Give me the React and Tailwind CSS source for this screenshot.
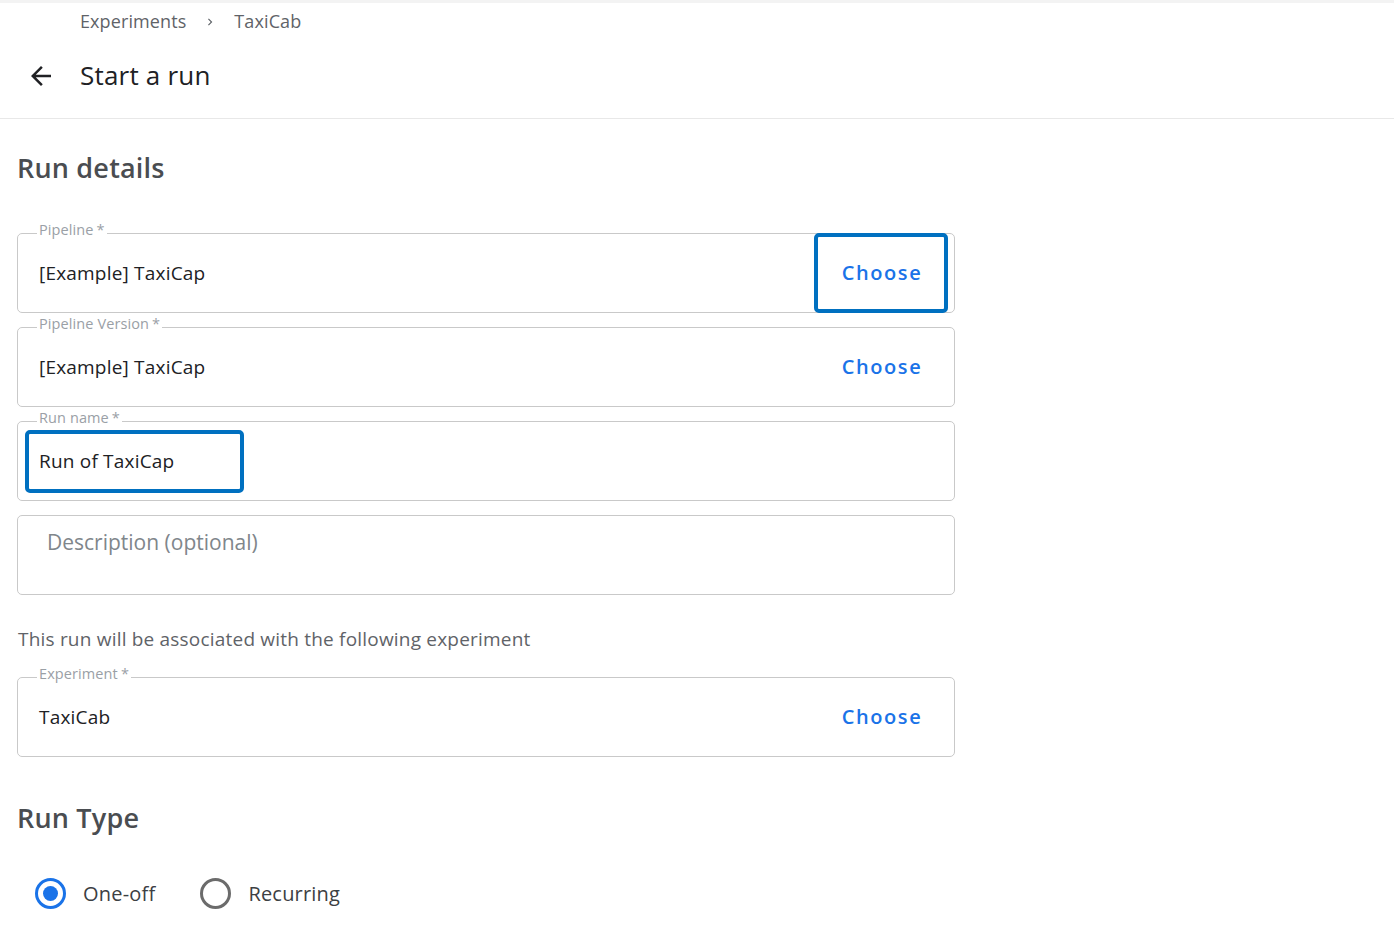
import React, { useState } from 'react';

const font = { fontFamily: '"Open Sans", Roboto, Arial, sans-serif' };

const Field = ({ label, value, choose, highlightChoose, highlightValue }) => (
  <fieldset className="border border-[#c9c9c9] rounded-[5px] px-[20px] mx-0 min-w-0">
    <legend className="-ml-[1px] px-[2px] pb-[6px] text-[14.5px] leading-[14px] text-[#9aa0a6] tracking-[0.1px]">
      {label}
      <span className="ml-[3px]">*</span>
    </legend>
    <div className="h-[78px] -mt-[9px] flex items-center justify-between">
      {highlightValue ? (
        <div className="-ml-[13px] h-[63px] w-[219px] border-[4px] border-[#0070c0] rounded-[5px] flex items-center pl-[10px] text-[19px] text-[#202124] tracking-[0.2px]">
          {value}
        </div>
      ) : (
        <span className="ml-[1px] text-[19px] text-[#202124] tracking-[0.2px]">{value}</span>
      )}
      {choose && (
        <div
          className={
            'h-[80px] w-[134px] -mr-[14px] flex items-center justify-center rounded-[5px] border-[4px] ' +
            (highlightChoose ? 'border-[#0070c0]' : 'border-transparent')
          }
        >
          <span className="ml-[2px] text-[20px] font-semibold tracking-[1.6px] text-[#1a73e8]">Choose</span>
        </div>
      )}
    </div>
  </fieldset>
);

const Radio = ({ checked, label, onClick }) => (
  <button onClick={onClick} className="flex items-center gap-[17px]">
    <span
      className={
        'w-[31px] h-[31px] rounded-full border-[3px] flex items-center justify-center ' +
        (checked ? 'border-[#1a73e8]' : 'border-[#6b6b6b]')
      }
    >
      {checked && <span className="w-[15px] h-[15px] rounded-full bg-[#1a73e8]" />}
    </span>
    <span className="text-[20px] text-[#3c4043] tracking-[0.2px]">{label}</span>
  </button>
);

export default function App() {
  const [runType, setRunType] = useState('oneoff');

  return (
    <div style={font} className="min-h-screen bg-white">
      <div className="border-t-[3px] border-[#f3f3f3] border-b border-b-[#e8e8e8] h-[119px]">
        <div className="flex items-center pl-[80px] pt-[5px] text-[18px] text-[#5f6368] tracking-[0.1px]">
          <span>Experiments</span>
          <svg className="mx-[17px]" width="14" height="14" viewBox="0 0 24 24">
            <path d="M8.6 16.6 13.2 12 8.6 7.4 10 6l6 6-6 6z" fill="#5f6368" />
          </svg>
          <span>TaxiCab</span>
        </div>
        <div className="flex items-center mt-[21px]">
          <svg className="ml-[26px] mr-[24px]" width="30" height="30" viewBox="0 0 24 24">
            <path d="M20 11H7.83l5.59-5.59L12 4l-8 8 8 8 1.41-1.41L7.83 13H20v-2z" fill="#202124" />
          </svg>
          <span className="text-[26px] text-[#202124] tracking-[0.2px]">Start a run</span>
        </div>
      </div>

      <div className="pl-[17px] w-[955px]">
        <h2 className="mt-[29px] text-[27px] leading-[39px] font-semibold text-[#4a4d51] tracking-[0.2px]">Run details</h2>

        <div className="mt-[36px] flex flex-col gap-[4px]">
          <Field label="Pipeline" value="[Example] TaxiCap" choose highlightChoose />
          <Field label="Pipeline Version" value="[Example] TaxiCap" choose />
          <Field label="Run name" value="Run of TaxiCap" highlightValue />
          <div className="mt-[10px] h-[80px] border border-[#c9c9c9] rounded-[5px] pl-[29px] pt-[11px] text-[21px] text-[#80868b]">
            Description (optional)
          </div>
        </div>

        <p className="mt-[31px] ml-[1px] text-[19px] leading-[27px] text-[#5f6368] tracking-[0.2px]">This run will be associated with the following experiment</p>

        <div className="mt-[14px]">
          <Field label="Experiment" value="TaxiCab" choose />
        </div>

        <h2 className="mt-[41px] text-[27px] leading-[39px] font-semibold text-[#4a4d51] tracking-[0.2px]">Run Type</h2>

        <div className="mt-[41px] ml-[18px] flex items-center gap-[45px]">
          <Radio checked={runType === 'oneoff'} label="One-off" onClick={() => setRunType('oneoff')} />
          <Radio checked={runType === 'recurring'} label="Recurring" onClick={() => setRunType('recurring')} />
        </div>
      </div>
    </div>
  );
}
